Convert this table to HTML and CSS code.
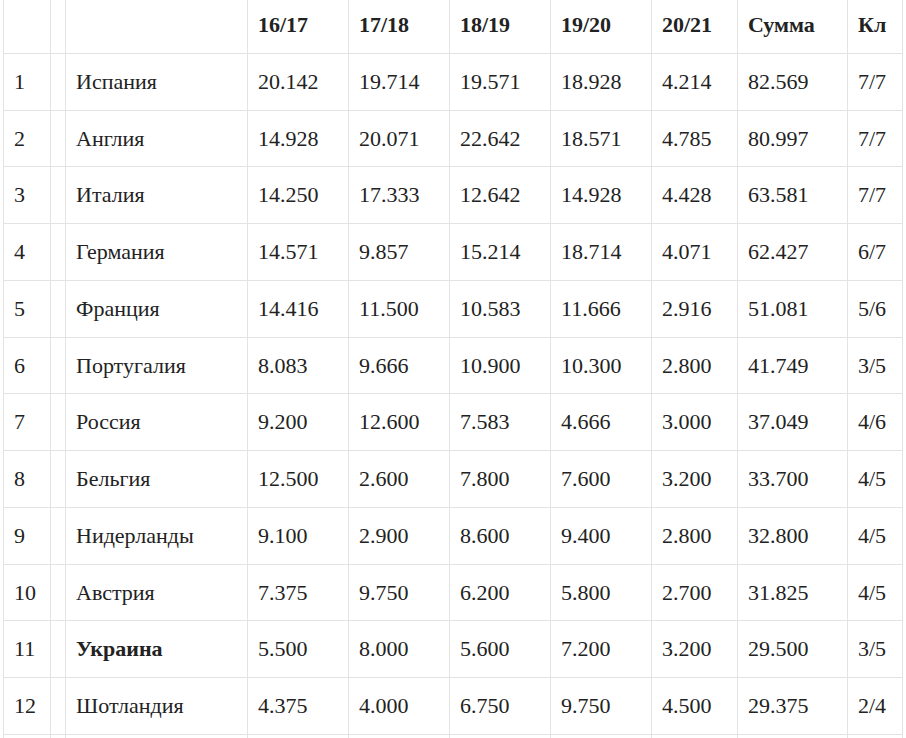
FILE: index.html
```html
<!DOCTYPE html>
<html lang="ru">
<head>
<meta charset="utf-8">
<title>Таблица коэффициентов</title>
<link rel="stylesheet" href="styles.css">
</head>
<body>
<table class="coef">
<colgroup>
<col class="c-num"><col class="c-gap"><col class="c-name">
<col class="c-season"><col class="c-season"><col class="c-season"><col class="c-season">
<col class="c-last"><col class="c-sum"><col class="c-kl">
</colgroup>
<thead>
<tr><th></th><th></th><th></th><th>16/17</th><th>17/18</th><th>18/19</th><th>19/20</th><th>20/21</th><th>Сумма</th><th>Кл</th></tr>
</thead>
<tbody>
<tr><td>1</td><td></td><td>Испания</td><td>20.142</td><td>19.714</td><td>19.571</td><td>18.928</td><td>4.214</td><td>82.569</td><td>7/7</td></tr>
<tr><td>2</td><td></td><td>Англия</td><td>14.928</td><td>20.071</td><td>22.642</td><td>18.571</td><td>4.785</td><td>80.997</td><td>7/7</td></tr>
<tr><td>3</td><td></td><td>Италия</td><td>14.250</td><td>17.333</td><td>12.642</td><td>14.928</td><td>4.428</td><td>63.581</td><td>7/7</td></tr>
<tr><td>4</td><td></td><td>Германия</td><td>14.571</td><td>9.857</td><td>15.214</td><td>18.714</td><td>4.071</td><td>62.427</td><td>6/7</td></tr>
<tr><td>5</td><td></td><td>Франция</td><td>14.416</td><td>11.500</td><td>10.583</td><td>11.666</td><td>2.916</td><td>51.081</td><td>5/6</td></tr>
<tr><td>6</td><td></td><td>Португалия</td><td>8.083</td><td>9.666</td><td>10.900</td><td>10.300</td><td>2.800</td><td>41.749</td><td>3/5</td></tr>
<tr><td>7</td><td></td><td>Россия</td><td>9.200</td><td>12.600</td><td>7.583</td><td>4.666</td><td>3.000</td><td>37.049</td><td>4/6</td></tr>
<tr><td>8</td><td></td><td>Бельгия</td><td>12.500</td><td>2.600</td><td>7.800</td><td>7.600</td><td>3.200</td><td>33.700</td><td>4/5</td></tr>
<tr><td>9</td><td></td><td>Нидерланды</td><td>9.100</td><td>2.900</td><td>8.600</td><td>9.400</td><td>2.800</td><td>32.800</td><td>4/5</td></tr>
<tr><td>10</td><td></td><td>Австрия</td><td>7.375</td><td>9.750</td><td>6.200</td><td>5.800</td><td>2.700</td><td>31.825</td><td>4/5</td></tr>
<tr><td>11</td><td></td><td class="bold">Украина</td><td>5.500</td><td>8.000</td><td>5.600</td><td>7.200</td><td>3.200</td><td>29.500</td><td>3/5</td></tr>
<tr><td>12</td><td></td><td>Шотландия</td><td>4.375</td><td>4.000</td><td>6.750</td><td>9.750</td><td>4.500</td><td>29.375</td><td>2/4</td></tr>
<tr class="tail"><td></td><td></td><td></td><td></td><td></td><td></td><td></td><td></td><td></td><td></td></tr>
</tbody>
</table>
</body>
</html>
```

FILE: styles.css
```css
html, body {
  margin: 0;
  padding: 0;
  background: #ffffff;
  overflow: hidden;
}

.coef {
  margin: -4px 0 0 3px;
  border-collapse: collapse;
  table-layout: fixed;
  width: 900px;
  font-family: "Liberation Serif", "Times New Roman", serif;
  font-size: 22px;
  color: #222222;
}

.c-num { width: 47px; }
.c-gap { width: 15px; }
.c-name { width: 182px; }
.c-season { width: 101px; }
.c-last { width: 86px; }
.c-sum { width: 110px; }
.c-kl { width: 55px; }

.coef th,
.coef td {
  border: 1px solid #e3e3e3;
  padding: 12px 10px;
  height: 31.75px;
  line-height: 31.75px;
  text-align: left;
  vertical-align: middle;
  white-space: nowrap;
  overflow: hidden;
}

.coef th {
  font-weight: bold;
}

.coef td:nth-child(2),
.coef th:nth-child(2) {
  padding: 12px 0;
}

.bold {
  font-weight: bold;
}
```
